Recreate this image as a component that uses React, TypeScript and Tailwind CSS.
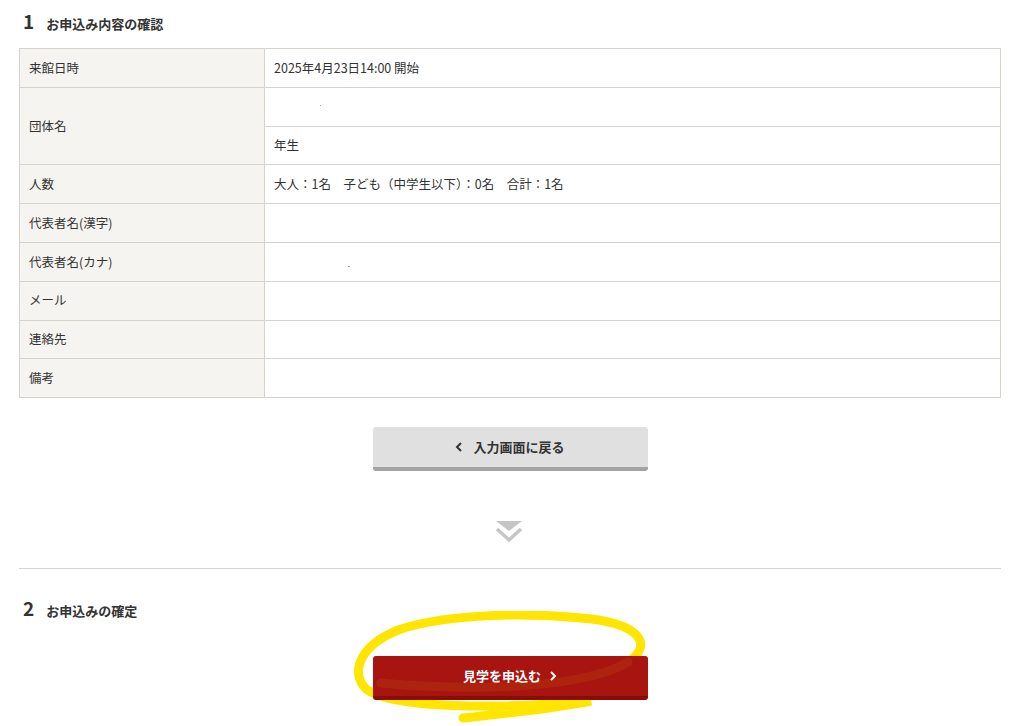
import React from 'react'

const font = { fontFamily: '"Noto Sans CJK JP", "Noto Sans", sans-serif' }

function Row({ label, children }: { label: string; children?: React.ReactNode }) {
  return (
    <tr>
      <th className="h-[38.8px] w-[245px] border border-[#d6d3cb] bg-[#f5f4f0] pl-[9px] text-left text-[12.5px] font-normal text-[#333]">{label}</th>
      <td className="h-[38.8px] border border-[#d6d3cb] bg-white pl-[9px] text-[12.5px] text-[#333]">{children}</td>
    </tr>
  )
}

function Heading({ num, text }: { num: string; text: string }) {
  return (
    <div className="flex items-baseline gap-[12px] text-[#333]">
      <span className="text-[19px] font-bold leading-none">{num}</span>
      <span className="text-[13px] font-bold leading-none">{text}</span>
    </div>
  )
}

export default function App() {
  return (
    <div className="min-h-screen w-[1024px] bg-white" style={font}>
      <div className="px-[19px] pt-[11px] pr-[23px]">
        <div className="pl-[4px]">
          <Heading num="1" text="お申込み内容の確認" />
        </div>

        <table className="mt-[18px] w-full border-collapse border border-[#d6d3cb]">
          <tbody>
            <Row label="来館日時">2025年4月23日14:00 開始</Row>
            <tr>
              <th rowSpan={2} className="w-[245px] border border-[#d6d3cb] bg-[#f5f4f0] pl-[9px] text-left text-[12.5px] font-normal text-[#333]">団体名</th>
              <td className="h-[38.8px] border border-[#d6d3cb] bg-white pl-[9px] text-[12.5px] text-[#333]">
                <span className="ml-[46px] inline-block h-[1px] w-[1px] -translate-y-[5px] bg-[#9ab]"></span>
              </td>
            </tr>
            <tr>
              <td className="h-[38.8px] border border-[#d6d3cb] bg-white pl-[9px] text-[12.5px] text-[#333]">年生</td>
            </tr>
            <Row label="人数">大人：1名　子ども（中学生以下）：0名　合計：1名</Row>
            <Row label="代表者名(漢字)" />
            <Row label="代表者名(カナ)">
              <span className="ml-[74px] inline-block h-[1px] w-[2px] bg-[#9ab]"></span>
            </Row>
            <Row label="メール" />
            <Row label="連絡先" />
            <Row label="備考" />
          </tbody>
        </table>

        <div className="mt-[29px] flex justify-center">
          <button className="flex h-[44px] w-[275px] items-center justify-center gap-[10px] rounded-[3px] border-b-[4px] border-[#a3a3a3] bg-[#e0e0e0] text-[13px] font-bold text-[#333]">
            <svg width="8" height="10" viewBox="0 0 8 10" fill="none" stroke="#333" strokeWidth="2">
              <path d="M6 1 L2 5 L6 9" />
            </svg>
            入力画面に戻る
          </button>
        </div>

        <div className="mt-[49px] flex justify-center">
          <svg width="28" height="24" viewBox="0 0 28 24" className="ml-[-2px]">
            <path d="M1 1 H27 L14 11 Z" fill="#c6c6c6" />
            <path d="M2 9 L14 20 L26 9" fill="none" stroke="#c6c6c6" strokeWidth="3.5" />
          </svg>
        </div>

        <div className="mt-[24px] h-px w-full bg-[#d4d4d4]"></div>

        <div className="mt-[29px] pl-[4px]">
          <Heading num="2" text="お申込みの確定" />
        </div>

        <div className="mt-[39px] flex justify-center">
          <div className="relative">
            <svg className="pointer-events-none absolute left-[-22px] top-[-45px]" width="310" height="116" viewBox="0 0 310 116">
              <path
                d="M277 51 C302 35 292 12 230 7 C180 2 100 2 50 18 C10 33 -2 60 15 78 C40 98 150 98 240 90 C200 98 140 104 112 107"
                fill="none"
                stroke="#ffe500"
                strokeWidth="9"
                strokeLinecap="round"
              />
            </svg>
            <button className="relative flex h-[44px] w-[275px] items-center justify-center gap-[8px] rounded-[3px] border-b-[4px] border-[#880d09] bg-[#a8140f] text-[13px] font-bold text-white">
              見学を申込む
              <svg width="8" height="10" viewBox="0 0 8 10" fill="none" stroke="#fff" strokeWidth="2">
                <path d="M2 1 L6 5 L2 9" />
              </svg>
            </button>
            <svg className="pointer-events-none absolute left-[-22px] top-[-45px] opacity-[0.07]" width="310" height="116" viewBox="0 0 310 116">
              <path d="M277 51 C240 74 140 82 30 72" fill="none" stroke="#ffe500" strokeWidth="9" strokeLinecap="round" />
            </svg>
          </div>
        </div>
      </div>
    </div>
  )
}
